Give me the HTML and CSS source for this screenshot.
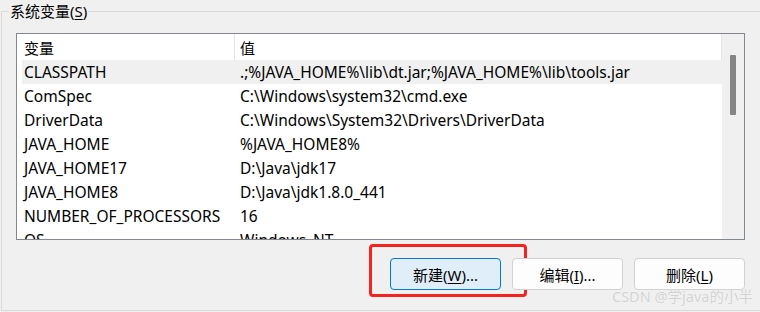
FILE: index.html
```html
<!DOCTYPE html>
<html lang="zh-CN">
<head>
<meta charset="utf-8">
<link rel="stylesheet" href="styles.css">
</head>
<body>
<fieldset class="group">
  <legend class="group-title">系统变量(<u>S</u>)</legend>
  <div class="listbox">
    <div class="list">
      <div class="row head">
        <div class="c1">变量</div>
        <div class="c2">值</div>
      </div>
      <div class="row sel"><div class="c1">CLASSPATH</div><div class="c2">.;%JAVA_HOME%\lib\dt.jar;%JAVA_HOME%\lib\tools.jar</div></div>
      <div class="row"><div class="c1">ComSpec</div><div class="c2">C:\Windows\system32\cmd.exe</div></div>
      <div class="row"><div class="c1">DriverData</div><div class="c2">C:\Windows\System32\Drivers\DriverData</div></div>
      <div class="row"><div class="c1">JAVA_HOME</div><div class="c2">%JAVA_HOME8%</div></div>
      <div class="row"><div class="c1">JAVA_HOME17</div><div class="c2">D:\Java\jdk17</div></div>
      <div class="row"><div class="c1">JAVA_HOME8</div><div class="c2">D:\Java\jdk1.8.0_441</div></div>
      <div class="row"><div class="c1">NUMBER_OF_PROCESSORS</div><div class="c2">16</div></div>
      <div class="row"><div class="c1">OS</div><div class="c2">Windows_NT</div></div>
    </div>
    <div class="scrollbar"><div class="thumb"></div></div>
  </div>
  <div class="buttons">
    <button class="btn primary">新建(<u>W</u>)...<span class="mark"></span></button>
    <button class="btn">编辑(<u>I</u>)...</button>
    <button class="btn">删除(<u>L</u>)</button>
  </div>
  <div class="watermark">CSDN @学java的小半</div>
</fieldset>
</body>
</html>
```
FILE: styles.css
```css
html, body {
  margin: 0;
  padding: 0;
}
body {
  width: 760px;
  height: 312px;
  overflow: hidden;
  background: #f0f0f0;
  font-family: "Noto Sans", "Noto Sans CJK SC", sans-serif;
  font-size: 15.5px;
  color: #000;
}
.group {
  position: relative;
  margin: 0 0 0 1px;
  padding: 11px 0 0 14px;
  width: 759px;
  height: 311px;
  box-sizing: border-box;
  border: 1px solid #dadada;
  border-right: none;
}
.group-title {
  margin-left: -7px;
  padding: 0 1px;
  height: 22px;
  line-height: 22px;
  font-size: 15px;
}
.group-title u, .btn u {
  text-underline-offset: 2px;
}
.listbox {
  display: flex;
  width: 729px;
  height: 207px;
  box-sizing: border-box;
  border: 1px solid #828790;
  background: #fff;
}
.list {
  flex: 0 0 705px;
  overflow: hidden;
  padding-left: 5px;
  box-sizing: border-box;
}
.row {
  display: flex;
  height: 24px;
  align-items: center;
  white-space: nowrap;
}
.row.head {
  height: 26px;
  align-items: stretch;
  border-right: 1px solid #e5e5e5;
  font-size: 15px;
}
.row.head .c1 {
  border-right: 1px solid #e5e5e5;
}
.row.head > div {
  display: flex;
  align-items: center;
}
.row.sel {
  background: #f0f0f0;
}
.c1 {
  flex: 0 0 213px;
  box-sizing: border-box;
  padding-left: 2px;
}
.c2 {
  flex: 1;
  padding-left: 5px;
}
.scrollbar {
  flex: 0 0 22px;
  background: #f0f0f0;
  padding: 21px 0 0 8px;
  box-sizing: border-box;
}
.thumb {
  width: 6px;
  height: 60px;
  background: #858585;
  border-radius: 1px;
}
.buttons {
  display: flex;
  gap: 11px;
  width: 729px;
  justify-content: flex-end;
  margin-top: 18px;
}
.btn {
  position: relative;
  width: 111px;
  height: 32px;
  box-sizing: border-box;
  border: 1px solid #d1d1d1;
  border-radius: 4px;
  background: #fdfdfd;
  font-family: "Noto Sans", "Noto Sans CJK SC", sans-serif;
  font-size: 15px;
  color: #000;
  padding: 0;
}
.btn.primary {
  background: #e0eef9;
  border-color: #0078d4;
}
.mark {
  position: absolute;
  left: -22px;
  top: -15px;
  width: 158px;
  height: 53px;
  box-sizing: border-box;
  border: 3px solid #f5231f;
  border-radius: 4px;
}
.watermark {
  position: absolute;
  left: 610px;
  top: 265px;
  font-size: 14.5px;
  line-height: 19px;
  color: #d2d2d2;
  text-shadow: 0 0 1px #ffffff;
  white-space: nowrap;
}
```
